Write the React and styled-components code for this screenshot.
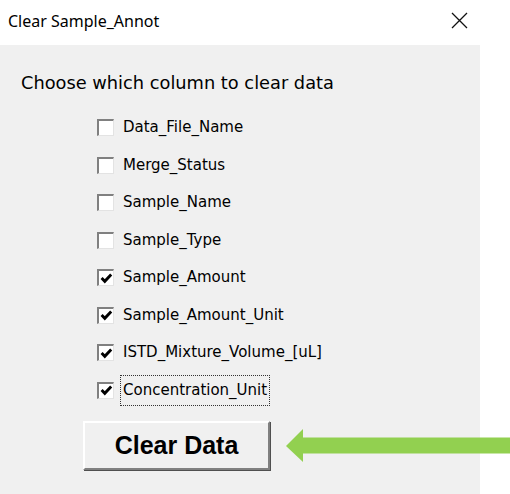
import React, { useState } from "react";
import styled, { createGlobalStyle } from "styled-components";

const GlobalStyle = createGlobalStyle`
  html, body {
    margin: 0;
    padding: 0;
    background: #ffffff;
    width: 510px;
    height: 494px;
    overflow: hidden;
  }
`;

const COLUMNS = [
  { name: "Data_File_Name", checked: false },
  { name: "Merge_Status", checked: false },
  { name: "Sample_Name", checked: false },
  { name: "Sample_Type", checked: false },
  { name: "Sample_Amount", checked: true },
  { name: "Sample_Amount_Unit", checked: true },
  { name: "ISTD_Mixture_Volume_[uL]", checked: true },
  { name: "Concentration_Unit", checked: true, focused: true },
];

const CheckIcon = () => (
  <svg width="13" height="13" viewBox="0 0 13 13">
    <path d="M1.6 6 L4.8 9.3 L11.2 2.6" fill="none" stroke="#000" strokeWidth="2.9" />
  </svg>
);

const CloseIcon = () => (
  <svg width="17" height="17" viewBox="0 0 17 17">
    <path d="M1 1 L16 16 M16 1 L1 16" stroke="#111" strokeWidth="1.3" />
  </svg>
);

const App = () => {
  const [cols, setCols] = useState(COLUMNS);

  const toggle = (i) => {
    setCols(cols.map((c, j) => (j === i ? { ...c, checked: !c.checked } : c)));
  };

  return (
    <>
      <GlobalStyle />
      <Window>
        <TitleBar>
          <Title>Clear Sample_Annot</Title>
          <CloseButton>
            <CloseIcon />
          </CloseButton>
        </TitleBar>
        <Body>
          <Panel>
            <Heading>Choose which column to clear data</Heading>
            <List>
              {cols.map((c, i) => (
                <Row key={c.name} onClick={() => toggle(i)}>
                  <Box>{c.checked && <CheckIcon />}</Box>
                  <Label $focused={c.focused}>{c.name}</Label>
                </Row>
              ))}
            </List>
            <ClearButton>Clear Data</ClearButton>
          </Panel>
          <Arrow width="224" height="34" viewBox="0 0 224 34">
            <polygon points="0,17 17,0 17,8.5 224,8.5 224,24.5 17,24.5 17,33" fill="#92d050" />
          </Arrow>
        </Body>
      </Window>
    </>
  );
};

const Window = styled.div`
  position: relative;
  width: 510px;
  height: 494px;
  display: flex;
  flex-direction: column;
  background: #ffffff;
`;

const TitleBar = styled.div`
  height: 45px;
  display: flex;
  align-items: center;
  justify-content: space-between;
  padding: 0 42px 0 8px;
  box-sizing: border-box;
  width: 510px;
`;

const Title = styled.div`
  font-family: "Noto Sans", sans-serif;
  font-size: 16px;
  color: #000;
  margin-top: -3px;
`;

const CloseButton = styled.div`
  display: flex;
  margin-top: -5px;
`;

const Body = styled.div`
  position: relative;
  flex: 1;
  display: flex;
`;

const Panel = styled.div`
  width: 480px;
  background: #f0f0f0;
  box-sizing: border-box;
  padding: 27px 0 0 21px;
  display: flex;
  flex-direction: column;
`;

const Heading = styled.div`
  font-family: "DejaVu Sans", sans-serif;
  font-size: 17.8px;
  color: #000;
  line-height: 22px;
`;

const List = styled.div`
  display: flex;
  flex-direction: column;
  gap: 20.5px;
  margin: 25px 0 0 76px;
`;

const Row = styled.div`
  display: flex;
  align-items: center;
  height: 17px;
  cursor: default;
`;

const Box = styled.div`
  width: 17px;
  height: 17px;
  box-sizing: border-box;
  background: #fff;
  border-top: 2px solid #808080;
  border-left: 2px solid #808080;
  border-right: 1px solid #e3e3e3;
  border-bottom: 1px solid #e3e3e3;
  display: flex;
  align-items: center;
  justify-content: center;
`;

const Label = styled.span`
  font-family: "DejaVu Sans", sans-serif;
  font-size: 15px;
  color: #000;
  margin-left: 6px;
  padding: 7px 2px 7px 2px;
  border: 1px dotted ${(p) => (p.$focused ? "#333" : "transparent")};
  line-height: 15px;
`;

const ClearButton = styled.button`
  width: 187px;
  height: 49px;
  margin: 22px 0 0 62px;
  background: #f0f0f0;
  border-top: 2px solid #ffffff;
  border-left: 2px solid #ffffff;
  border-right: 2px solid #808080;
  border-bottom: 2px solid #808080;
  box-shadow: 1px 1px 0 #505050;
  font-family: "Liberation Sans", sans-serif;
  font-weight: bold;
  font-size: 25px;
  color: #000;
  padding: 0;
`;

const Arrow = styled.svg`
  position: absolute;
  left: 286px;
  top: 384px;
`;

export default App;
